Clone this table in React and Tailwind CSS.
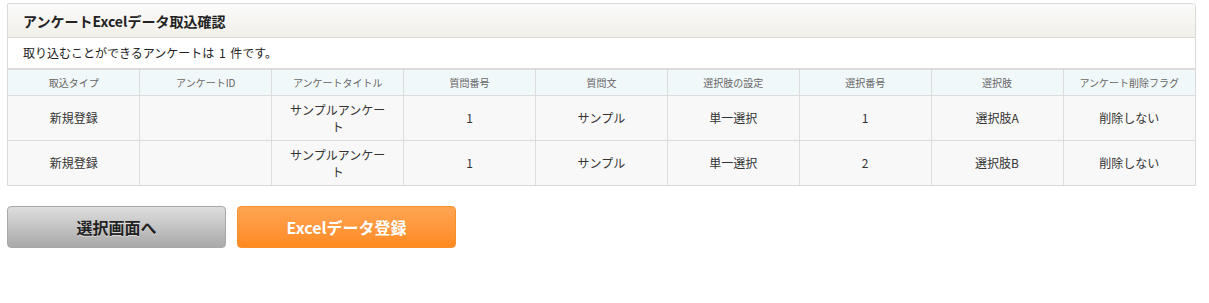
import React from "react";

const columns = [
  "取込タイプ",
  "アンケートID",
  "アンケートタイトル",
  "質問番号",
  "質問文",
  "選択肢の設定",
  "選択番号",
  "選択肢",
  "アンケート削除フラグ",
];

const rows = [
  ["新規登録", "", "サンプルアンケート", "1", "サンプル", "単一選択", "1", "選択肢A", "削除しない"],
  ["新規登録", "", "サンプルアンケート", "1", "サンプル", "単一選択", "2", "選択肢B", "削除しない"],
];

export default function App() {
  return (
    <div
      className="w-[1209px] h-[303px] bg-white text-[#333]"
      style={{ fontFamily: '"Noto Sans CJK JP", "Noto Sans", sans-serif' }}
    >
      <div className="pt-[3px] pl-[7px] w-[1196px]">
        <div className="border border-[#d9d9d9] rounded-tr-[4px] rounded-tl-[2px] bg-white">
          <div className="h-[34px] flex items-center px-[15px] bg-gradient-to-b from-[#fbfbfa] to-[#f1efe9] border-b border-[#d9d9d9] rounded-t-[3px]">
            <h2 className="text-[14px] font-bold text-[#222] leading-none">アンケートExcelデータ取込確認</h2>
          </div>
          <div className="h-[32px] flex items-center px-[15px] text-[12px] text-[#222] border-b-2 border-[#dcdcdc] [word-spacing:2px]">
            取り込むことができるアンケートは 1 件です。
          </div>
          <table className="w-full border-collapse table-fixed">
            <thead>
              <tr className="bg-[#f1f8fa]">
                {columns.map((c, i) => (
                  <th
                    key={c}
                    className={`h-[25px] text-[10px] font-normal text-[#666] border-b border-[#dcdcdc] ${i > 0 ? "border-l" : ""}`}
                  >
                    {c}
                  </th>
                ))}
              </tr>
            </thead>
            <tbody>
              {rows.map((r, ri) => (
                <tr key={ri} className="bg-[#f8f8f8]">
                  {r.map((v, i) => (
                    <td
                      key={i}
                      className={`h-[45px] text-[12px] text-center leading-[17px] border-[#dcdcdc] ${ri === 0 ? "border-b" : ""} ${i > 0 ? "border-l" : ""} ${i === 2 ? "px-[14px]" : ""}`}
                    >
                      {v}
                    </td>
                  ))}
                </tr>
              ))}
            </tbody>
          </table>
        </div>
        <div className="flex gap-[11px] mt-[20px]">
          <button className="w-[219px] h-[42px] rounded-[4px] border border-[#a8a8a8] bg-gradient-to-b from-[#dedede] to-[#a9a9a9] text-[16px] font-bold text-[#222] [text-shadow:0_1px_0_rgba(255,255,255,0.5)]">
            選択画面へ
          </button>
          <button className="w-[219px] h-[42px] rounded-[4px] border border-[#f6902c] bg-gradient-to-b from-[#ffa552] to-[#ff8a1f] text-[16px] font-bold text-white">
            Excelデータ登録
          </button>
        </div>
      </div>
    </div>
  );
}
